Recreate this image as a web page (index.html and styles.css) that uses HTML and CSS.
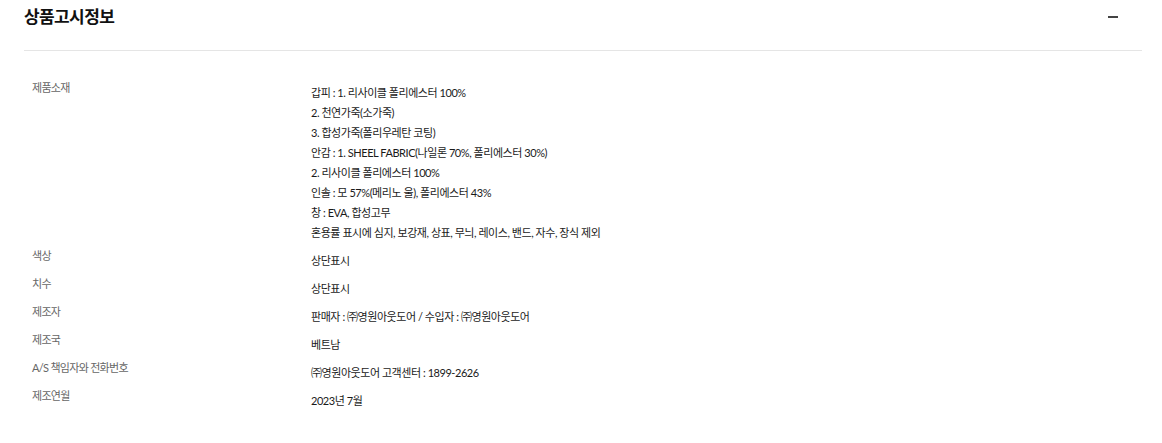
FILE: index.html
```html
<!DOCTYPE html>
<html lang="ko">
<head>
<meta charset="utf-8">
<link rel="stylesheet" href="styles.css">
</head>
<body>
<section class="notice">
  <div class="notice-head">
    <h2 class="notice-title">상품고시정보</h2>
    <span class="toggle" aria-label="접기"></span>
  </div>
  <dl class="info">
    <div class="row">
      <dt>제품소재</dt>
      <dd>
        <p>갑피 : 1. 리사이클 폴리에스터 100%</p>
        <p>2. 천연가죽(소가죽)</p>
        <p>3. 합성가죽(폴리우레탄 코팅)</p>
        <p>안감 : 1. SHEEL FABRIC(나일론 70%, 폴리에스터 30%)</p>
        <p>2. 리사이클 폴리에스터 100%</p>
        <p>인솔 : 모 57%(메리노 울), 폴리에스터 43%</p>
        <p>창 : EVA, 합성고무</p>
        <p>혼용률 표시에 심지, 보강재, 상표, 무늬, 레이스, 밴드, 자수, 장식 제외</p>
      </dd>
    </div>
    <div class="row"><dt>색상</dt><dd><p>상단표시</p></dd></div>
    <div class="row"><dt>치수</dt><dd><p>상단표시</p></dd></div>
    <div class="row"><dt>제조자</dt><dd><p>판매자 : ㈜영원아웃도어 / 수입자 : ㈜영원아웃도어</p></dd></div>
    <div class="row"><dt>제조국</dt><dd><p>베트남</p></dd></div>
    <div class="row"><dt>A/S 책임자와 전화번호</dt><dd><p>㈜영원아웃도어 고객센터 : 1899-2626</p></dd></div>
    <div class="row"><dt>제조연월</dt><dd><p>2023년 7월</p></dd></div>
  </dl>
</section>
</body>
</html>
```
FILE: styles.css
```css
* { box-sizing: border-box; }
html, body { margin: 0; padding: 0; background: #fff; }
body {
  font-family: Lato, "Noto Sans CJK KR", sans-serif;
  color: #222;
}
.notice {
  margin-left: 24px;
  width: 1118px;
}
.notice-head {
  display: flex;
  align-items: center;
  justify-content: space-between;
  height: 51px;
  padding: 0 24px 16px 0;
  border-bottom: 1px solid #e5e5e5;
}
.notice-title {
  margin: 0;
  font-size: 17px;
  font-weight: 700;
  letter-spacing: -0.6px;
  color: #111;
  line-height: 20px;
}
.toggle {
  display: block;
  width: 10px;
  height: 2px;
  background: #444;
}
.info {
  margin: 28px 0 0;
  padding: 0;
}
.row {
  display: flex;
}
.row dt {
  width: 287px;
  flex: none;
  padding-left: 8px;
  font-size: 11px;
  line-height: 18px;
  letter-spacing: -0.7px;
  color: #666;
}
.row dd {
  margin: 0;
  padding: 4px 0;
  font-size: 11px;
  letter-spacing: -0.45px;
  color: #1a1a1a;
}
.row dd p {
  margin: 0;
  line-height: 20px;
}
```
